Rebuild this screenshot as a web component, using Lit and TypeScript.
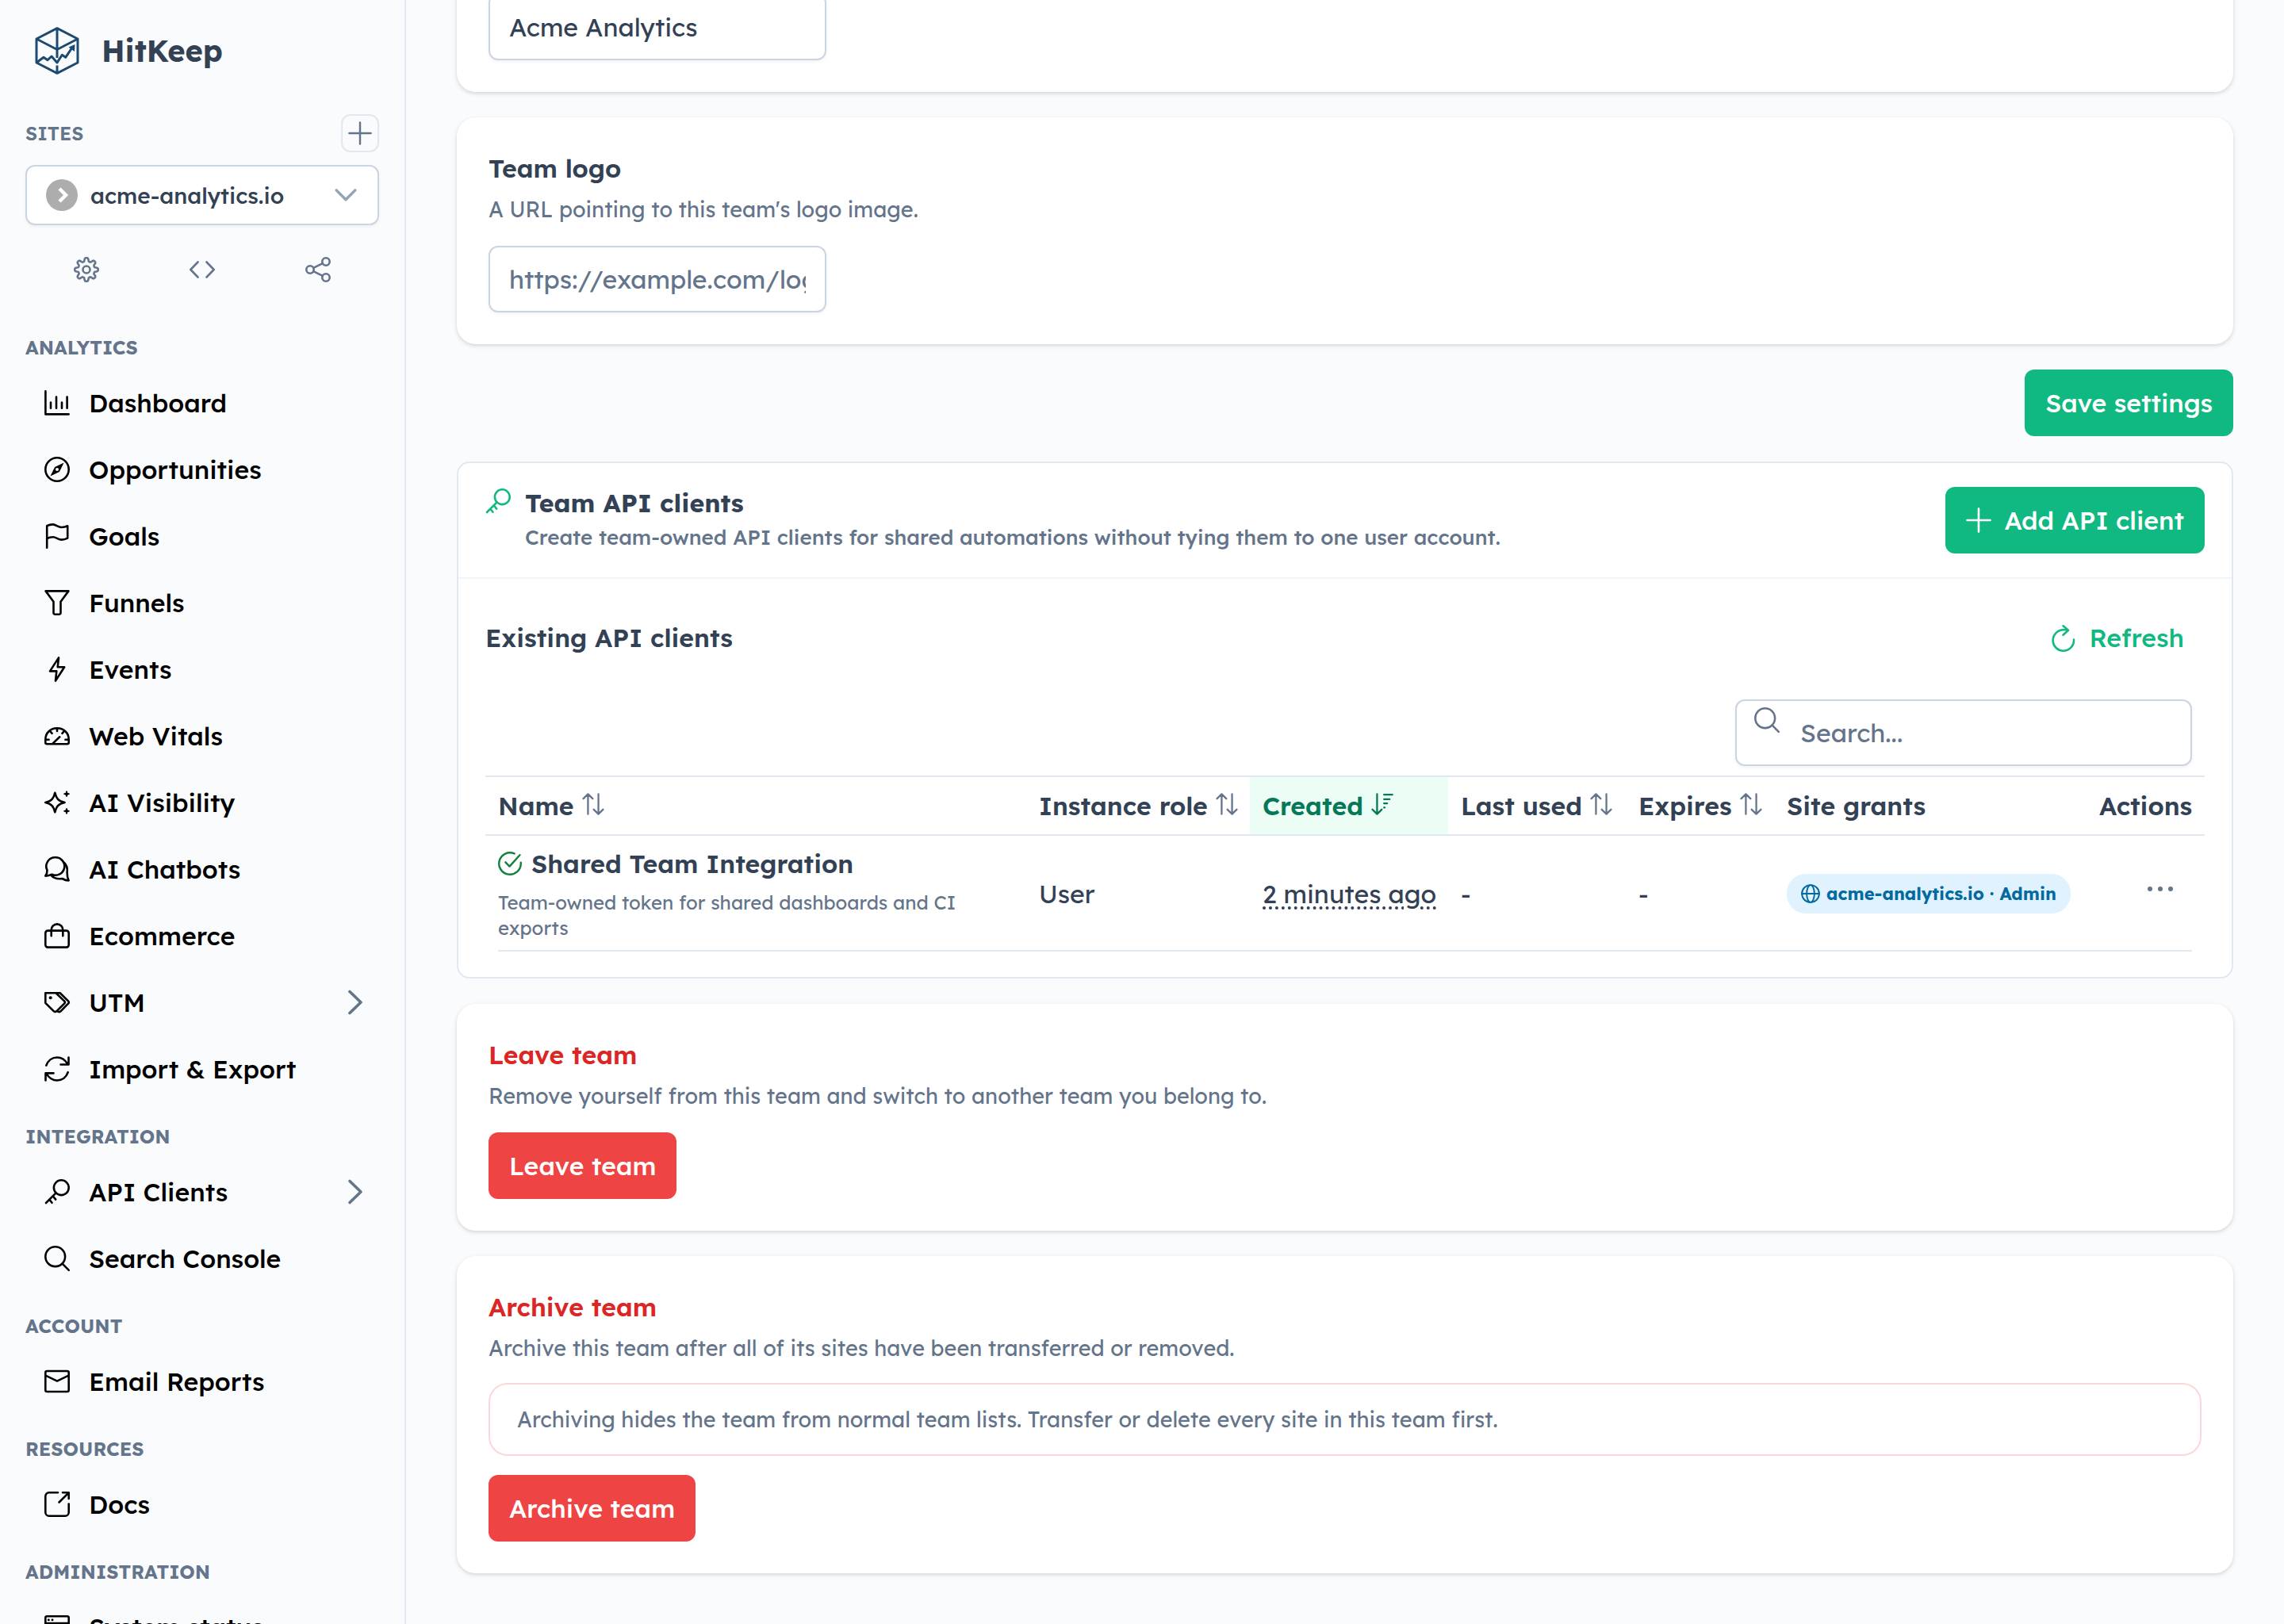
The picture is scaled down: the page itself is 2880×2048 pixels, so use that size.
import { LitElement, html, css, svg, nothing } from "lit";
import type { SVGTemplateResult } from "lit";
import { classMap } from "lit/directives/class-map.js";

/** Outline of an eight-toothed cog, traced around the centre of a 32-unit box. */
function cogOutline(): string {
  const points: string[] = [];
  const steps = 128;
  for (let i = 0; i < steps; i++) {
    const angle = (i / steps) * Math.PI * 2;
    const radius = 12.6 + 2.2 * Math.tanh(2 * Math.cos(8 * angle));
    points.push(
      `${(16 + radius * Math.sin(angle)).toFixed(2)} ${(16 - radius * Math.cos(angle)).toFixed(2)}`
    );
  }
  return `M${points.join("L")}Z`;
}

const ICONS: Record<string, SVGTemplateResult> = {
  chart: svg`<path d="M1.4 1.4V30.4H30.6M8 15.5V22.8M15 8.5V22.8M22 15.5V22.8M28.6 8.5V22.8"/>`,
  compass: svg`<circle cx="16" cy="16" r="14.7"/><path class="solid" fill-rule="evenodd" d="M24.6 7.4 18.9 18.9 7.4 24.6 13.1 13.1ZM16 14a2 2 0 1 0 0 4 2 2 0 0 0 0-4Z"/>`,
  flag: svg`<path d="M3.2 30.7V3.2Q6.5 1.3 11 1.4C14.5 1.7 17.5 5 21.5 5Q25.5 5 29.2 3.3V18.6Q25.5 20.6 21.5 20.6C17.5 20.6 14.5 17.2 11 17.2Q6.5 17.2 3.2 19"/>`,
  funnel: svg`<path d="M1.6 1.4H30.4L20.5 14.7V28.9A1.8 1.8 0 0 1 18.7 30.7H13.3A1.8 1.8 0 0 1 11.5 28.9V14.7Z"/>`,
  bolt: svg`<path d="M18 1.4 7 18.4H15.3L14 30.6 25.2 13.3H16.7Z"/>`,
  gauge: svg`<path d="M3.2 26.2A1.9 1.9 0 0 1 1.3 24.3V20.5C1.3 12 7.8 6.3 16 6.3S30.7 12 30.7 20.5V24.3A1.9 1.9 0 0 1 28.8 26.2ZM16 6.8V10M7.6 10.6 9.6 12.8M24.4 10.6 22.4 12.8M2.5 20.8H5.6M29.5 20.8H26.4M10.5 25.6 19.3 17.3"/>`,
  sparkles: svg`<path d="M13.3 3.8C14.8 10.5 17.5 14.3 25.6 16 17.5 17.7 14.8 21.5 13.3 28.2 11.8 21.5 9.1 17.7 1.3 16 9.1 14.3 11.8 10.5 13.3 3.8Z"/><path class="speck" d="M28 2 28.8 4.4 31.2 5.2 28.8 6 28 8.4 27.2 6 24.8 5.2 27.2 4.4ZM28 23.6 28.8 26 31.2 26.8 28.8 27.6 28 30 27.2 27.6 24.8 26.8 27.2 26Z"/>`,
  chats: svg`<path d="M13.6 1.3A11.2 11.2 0 1 1 9.5 22.7Q5.5 24.6 1.3 24.6 3.6 21.5 3.5 17.5A11.2 11.2 0 0 1 13.6 1.3ZM24.5 7.5Q29.8 12 28.6 20.5 28.7 26.5 30.6 30.4 26.5 30.3 22.5 28 13.5 29.5 8 23.3"/>`,
  bag: svg`<rect x="1.3" y="9.6" width="29.4" height="21" rx="3"/><path d="M8.7 16.3V8.7A7.3 7.3 0 0 1 23.3 8.7V16.3"/>`,
  tags: svg`<path d="M1.3 4.3H14.5L25.3 14.6Q26.7 16 25.3 17.4L15.3 27.3Q13.6 28.7 11.9 27.3L1.3 16.8ZM15 4.3H19.7L30.2 14.6Q31.5 16 30.2 17.4L20.5 27.3Q19 28.7 17 27.6"/><circle class="solid" cx="7.7" cy="10.3" r="2"/>`,
  sync: svg`<path d="M2.3 11.6C4.5 5.5 9.7 1.5 16 1.5 22 1.5 26.5 5 29.6 10.2M30.5 1.6V10.5H20.5M29.7 20.2C27.5 26.5 22.3 30.5 16 30.5 10 30.5 5.5 27 2.3 21.6M1.5 30.4V21.4H11.5"/>`,
  key: svg`<circle cx="21.3" cy="10.7" r="9.4"/><path d="M14.6 17.4 2 30M6.3 25.8 9.5 29.8M10.8 21.5 14.2 25.6"/>`,
  search: svg`<circle cx="13.7" cy="13.7" r="12.4"/><path d="M22.7 22.7 30.8 30.8"/>`,
  mail: svg`<rect x="1.3" y="3" width="29.4" height="26" rx="2"/><path d="M1.5 8.6 16 15.6 30.5 8.6"/>`,
  external: svg`<path d="M17 1.3H5.8A4.5 4.5 0 0 0 1.3 5.8V26.2A4.5 4.5 0 0 0 5.8 30.7H26.2A4.5 4.5 0 0 0 30.7 26.2V15.5M23 1.3H30.7V9M30.7 1.3 18.5 13.5"/>`,
  server: svg`<rect x="1.3" y="2.3" width="29.4" height="27.4" rx="2"/><path d="M1.5 11H30.5"/><circle class="solid" cx="5.3" cy="6.7" r="1.5"/><circle class="solid" cx="10" cy="6.7" r="1.5"/>`,
  cog: svg`<path d=${cogOutline()}/><circle cx="16" cy="16" r="4.5"/>`,
  code: svg`<path d="M10.5 6.5 1.3 16 10.5 25.5M21.5 6.5 30.7 16 21.5 25.5"/>`,
  share: svg`<circle cx="6" cy="16" r="4.7"/><circle cx="26" cy="6" r="4.7"/><circle cx="26" cy="26" r="4.7"/><path d="M10.2 13.9 21.8 8.1M10.2 18.1 21.8 23.9"/>`,
  plus: svg`<path d="M16 1.5V30.5M1.5 16H30.5"/>`,
  right: svg`<path d="M9 2.5 23 16 9 29.5"/>`,
  down: svg`<path d="M2.5 9 16 22.5 29.5 9"/>`,
  refresh: svg`<path d="M29 18.5A13.2 13.2 0 1 1 15.8 6.3H21.5M15.5 1.3 22 6.8 15.5 12.8"/>`,
  sort: svg`<path d="M8.5 30.5V2M1.8 8.2 8.5 1.6 15.2 8.2M23.5 1.5V30M16.8 23.8 23.5 30.4 30.2 23.8"/>`,
  sortDown: svg`<path d="M8.5 1.5V30M1.8 23.8 8.5 30.4 15.2 23.8M18.5 2.5H30.5M18.5 9H26.5M18.5 15H23M18.5 21H19.5"/>`,
  check: svg`<path d="M30.7 14.7V16A14.7 14.7 0 1 1 22 2.6M29.3 4.5 15.5 19.8 10 14.3"/>`,
  globe: svg`<circle cx="16" cy="16" r="14.5"/><ellipse cx="16" cy="16" rx="6.5" ry="14.5"/><path d="M1.5 16H30.5"/>`,
};

const icon = (name: string, kind = "") =>
  html`<svg class="icon ${kind}" viewBox="0 0 32 32" aria-hidden="true">${ICONS[name]}</svg>`;

interface NavItem {
  icon: string;
  label: string;
  expandable?: boolean;
}

const NAV: { title: string; items: NavItem[] }[] = [
  {
    title: "Analytics",
    items: [
      { icon: "chart", label: "Dashboard" },
      { icon: "compass", label: "Opportunities" },
      { icon: "flag", label: "Goals" },
      { icon: "funnel", label: "Funnels" },
      { icon: "bolt", label: "Events" },
      { icon: "gauge", label: "Web Vitals" },
      { icon: "sparkles", label: "AI Visibility" },
      { icon: "chats", label: "AI Chatbots" },
      { icon: "bag", label: "Ecommerce" },
      { icon: "tags", label: "UTM", expandable: true },
      { icon: "sync", label: "Import & Export" },
    ],
  },
  {
    title: "Integration",
    items: [
      { icon: "key", label: "API Clients", expandable: true },
      { icon: "search", label: "Search Console" },
    ],
  },
  { title: "Account", items: [{ icon: "mail", label: "Email Reports" }] },
  { title: "Resources", items: [{ icon: "external", label: "Docs" }] },
  { title: "Administration", items: [{ icon: "server", label: "System status" }] },
];

const COLUMNS = [
  { id: "name", label: "Name", sort: "sort" },
  { id: "role", label: "Instance role", sort: "sort" },
  { id: "created", label: "Created", sort: "sortDown" },
  { id: "used", label: "Last used", sort: "sort" },
  { id: "expires", label: "Expires", sort: "sort" },
  { id: "grants", label: "Site grants", sort: "" },
  { id: "actions", label: "Actions", sort: "" },
];

const base = css`
  *,
  *::before,
  *::after {
    box-sizing: border-box;
  }
  h1,
  h2,
  h3,
  p,
  ul {
    margin: 0;
    padding: 0;
    list-style: none;
  }
  button,
  input,
  select {
    margin: 0;
    font: inherit;
    color: inherit;
  }
  button {
    padding: 0;
    border: 0;
    background: none;
  }
  a {
    color: inherit;
    text-decoration: none;
  }
  .icon {
    display: block;
    flex: none;
    width: 32px;
    height: 32px;
    fill: none;
    stroke: currentColor;
    stroke-width: 2.6;
    stroke-linecap: round;
    stroke-linejoin: round;
    overflow: visible;
  }
  .icon .solid {
    fill: currentColor;
    stroke: none;
  }
  .icon .speck {
    fill: currentColor;
    stroke-width: 1.4;
  }
`;

class AppSidebar extends LitElement {
  static styles = [
    base,
    css`
      :host {
        display: block;
        padding: 34px 32px 0;
        border-right: 2px solid #e2e8f0;
        overflow: hidden;
      }
      .brand {
        display: flex;
        align-items: center;
        gap: 28px;
        height: 60px;
        padding-left: 12px;
        font-size: 38px;
        font-weight: 700;
      }
      .mark {
        width: 56px;
        height: 60px;
        fill: none;
        stroke: #1c4b72;
        stroke-width: 3;
        stroke-linejoin: round;
      }
      .mark .tip {
        fill: #1c4b72;
        stroke: none;
      }
      .sites {
        display: flex;
        align-items: center;
        justify-content: space-between;
        margin-top: 50px;
      }
      .heading {
        color: #64748b;
        font-size: 24px;
        font-weight: 600;
        line-height: 31px;
        text-transform: uppercase;
      }
      .nav .heading {
        padding: 28px 0 12px;
        font-weight: 700;
      }
      .add {
        display: grid;
        place-items: center;
        width: 48px;
        height: 48px;
        border: 2px solid #e2e8f0;
        border-radius: 12px;
        color: #64748b;
      }
      .add .icon {
        width: 30px;
        height: 30px;
      }
      .picker {
        display: flex;
        align-items: center;
        gap: 16px;
        height: 76px;
        margin-top: 16px;
        padding: 0 26px 0 24px;
        border: 2px solid #cbd5e1;
        border-radius: 12px;
        background: #fff;
        box-shadow: 0 2px 4px rgb(18 18 23 / 5%);
      }
      .favicon {
        width: 40px;
        height: 40px;
        flex: none;
      }
      .picker select {
        flex: 1;
        min-width: 0;
        padding: 0;
        border: 0;
        background: none;
        appearance: none;
        font-size: 28px;
        font-weight: 500;
        color: #334155;
        outline: 0;
      }
      .picker .icon {
        width: 28px;
        height: 28px;
        color: #94a3b8;
        stroke-width: 4;
      }
      .tools {
        display: grid;
        grid-template-columns: repeat(3, 1fr);
        justify-items: center;
        padding: 32px 4px 31px;
        color: #64748b;
      }
      .tools button {
        display: grid;
        place-items: center;
        width: 48px;
        height: 48px;
      }
      .link {
        display: flex;
        align-items: center;
        gap: 24px;
        height: 84px;
        padding: 0 14px 0 24px;
        color: #000;
        font-size: 32px;
        font-weight: 500;
      }
      .label {
        flex: 1;
      }
      .more {
        color: #64748b;
        stroke-width: 3.6;
      }
    `,
  ];

  render() {
    return html`
      <div class="brand">
        <svg class="mark" viewBox="0 0 56 60" aria-hidden="true">
          <path d="M28 1.7 54 15V45L28 58.3 2 45V15ZM2 15 28 28.5 54 15M28 1.7V39M28 48.5V58" />
          <path d="M2 45 11 38.3 16 41.7 21 37 28 45 34.3 35.3 38.7 38.3 47 26" />
          <path class="tip" d="M42.5 25.5 50.5 22 50 31Z" />
        </svg>
        <span>HitKeep</span>
      </div>
      <div class="sites">
        <h2 class="heading">Sites</h2>
        <button class="add" type="button" aria-label="Add site">${icon("plus")}</button>
      </div>
      <label class="picker">
        <svg class="favicon" viewBox="0 0 40 40" aria-hidden="true">
          <circle cx="20" cy="20" r="20" fill="#adadad" />
          <path d="M17 12 25 20 17 28" fill="none" stroke="#fff" stroke-width="4.5" />
        </svg>
        <select aria-label="Site">
          <option>acme-analytics.io</option>
        </select>
        ${icon("down")}
      </label>
      <div class="tools">
        <button type="button" aria-label="Site settings">${icon("cog")}</button>
        <button type="button" aria-label="Tracking code">${icon("code")}</button>
        <button type="button" aria-label="Share">${icon("share")}</button>
      </div>
      <nav class="nav">
        ${NAV.map(
          (group) => html`
            <h2 class="heading">${group.title}</h2>
            <ul>
              ${group.items.map(
                (item) => html`<li>
                  <a class="link" href="#">
                    ${icon(item.icon)}<span class="label">${item.label}</span>
                    ${item.expandable ? icon("right", "more") : nothing}
                  </a>
                </li>`
              )}
            </ul>
          `
        )}
      </nav>
    `;
  }
}
customElements.define("app-sidebar", AppSidebar);

class TeamSettings extends LitElement {
  static styles = [
    base,
    css`
      :host {
        display: flex;
        flex-direction: column;
        gap: 32px;
        padding: 0 64px 64px;
        font-size: 32px;
        line-height: 42px;
      }
      .card {
        padding: 40px;
        border-radius: 24px;
        background: #fff;
        box-shadow: 0 2px 6px rgb(0 0 0 / 10%), 0 2px 4px rgb(0 0 0 / 6%);
      }
      /* The page is scrolled so that the first field meets the top edge. */
      .scrolled {
        margin-top: -48px;
      }
      .title {
        font-size: 32px;
        font-weight: 600;
        line-height: 48px;
      }
      .danger .title {
        color: #dc2626;
      }
      .hint {
        margin: 8px 0 26px;
        color: #64748b;
        font-size: 27px;
        line-height: 40px;
      }
      .field {
        display: block;
        width: 426px;
        height: 84px;
        padding: 0 24px;
        border: 2px solid #cbd5e1;
        border-radius: 12px;
        background: #fff;
        box-shadow: 0 2px 4px rgb(18 18 23 / 5%);
        outline: 0;
      }
      .field::placeholder {
        color: #64748b;
        opacity: 1;
      }
      .button {
        display: inline-flex;
        align-items: center;
        gap: 16px;
        height: 84px;
        padding: 0 26px;
        border-radius: 12px;
        color: #fff;
        font-weight: 500;
      }
      .button .icon {
        width: 32px;
        height: 32px;
        stroke-width: 2.6;
      }
      .primary {
        background: #10b981;
      }
      .red {
        background: #ef4444;
      }
      .text {
        color: #10b981;
      }
      .save {
        align-self: flex-end;
      }
      .panel {
        border: 2px solid #e2e8f0;
        border-radius: 16px;
        background: #fff;
      }
      .top {
        display: flex;
        align-items: center;
        justify-content: space-between;
        padding: 30px 34px;
        border-bottom: 2px solid #f1f5f9;
      }
      .intro {
        display: flex;
        gap: 18px;
      }
      .intro .icon {
        margin-top: 2px;
        color: #10b981;
      }
      .name {
        margin-bottom: 4px;
        font-size: 32px;
        font-weight: 700;
        line-height: 40px;
      }
      .about {
        color: #64748b;
        font-size: 26px;
        font-weight: 500;
        line-height: 40px;
      }
      .body {
        padding: 32px 34px;
      }
      .bar {
        display: flex;
        align-items: center;
        justify-content: space-between;
      }
      .search {
        display: flex;
        width: 576px;
        gap: 26px;
        margin: 36px 16px 12px auto;
        padding: 0 22px;
      }
      .search .icon {
        margin-top: 8px;
        color: #64748b;
      }
      .search input {
        flex: 1;
        min-width: 0;
        padding: 0;
        border: 0;
        background: none;
        outline: 0;
      }
      .search input::placeholder {
        color: #64748b;
        opacity: 1;
      }
      table {
        width: 100%;
        table-layout: fixed;
        border-collapse: separate;
        border-spacing: 0;
        text-align: left;
      }
      th {
        height: 76px;
        padding: 0 16px;
        border-top: 2px solid #e2e8f0;
        border-bottom: 2px solid #e2e8f0;
        font-weight: 600;
      }
      .sorter {
        display: inline-flex;
        align-items: center;
        gap: 10px;
        white-space: nowrap;
      }
      .sorter .icon {
        width: 28px;
        height: 28px;
        margin-bottom: 4px;
        color: #64748b;
      }
      .w-role {
        width: 282px;
      }
      .w-created {
        width: 250px;
      }
      .w-used {
        width: 224px;
      }
      .w-expires {
        width: 187px;
      }
      .w-grants {
        width: 394px;
      }
      .w-actions {
        width: 149px;
        text-align: right;
      }
      .sorted,
      .sorted .sorter .icon {
        color: #047857;
      }
      .sorted {
        background: #ecfdf5;
      }
      td {
        padding: 14px 16px 12px;
      }
      .client {
        display: flex;
        align-items: center;
        gap: 12px;
        margin-bottom: 12px;
        font-weight: 600;
      }
      .client .icon {
        width: 30px;
        height: 30px;
        color: #15803d;
      }
      .note {
        color: #64748b;
        font-size: 24px;
        line-height: 32px;
      }
      .ago {
        text-decoration: underline dotted 4px;
        text-underline-offset: 4px;
        white-space: nowrap;
      }
      .tag {
        display: inline-flex;
        align-items: center;
        gap: 8px;
        height: 50px;
        padding: 0 18px;
        border-radius: 24px;
        background: #e0f2fe;
        color: #0369a1;
        font-size: 22px;
        font-weight: 700;
        white-space: nowrap;
      }
      .tag .icon {
        width: 24px;
        height: 24px;
      }
      .menu {
        display: inline-grid;
        place-items: center;
        width: 80px;
        height: 84px;
        vertical-align: bottom;
      }
      .dots {
        width: 32px;
        height: 18px;
        fill: #64748b;
      }
      .rule {
        height: 2px;
        margin: 0 16px;
        background: #e2e8f0;
      }
      .above-notice {
        margin-bottom: 24px;
      }
      .notice {
        margin-bottom: 24px;
        padding: 24px 34px;
        border: 2px solid #fad7d9;
        border-radius: 24px;
        color: #64748b;
        font-size: 27px;
        line-height: 40px;
      }
    `,
  ];

  render() {
    return html`
      <section class="card scrolled">
        <input class="field" type="text" aria-label="Team name" value="Acme Analytics" />
      </section>

      <section class="card">
        <h2 class="title"><label for="logo">Team logo</label></h2>
        <p class="hint">A URL pointing to this team's logo image.</p>
        <input class="field" id="logo" type="url" placeholder="https://example.com/logo.png" />
      </section>

      <button class="button primary save" type="button">Save settings</button>

      <section class="panel">
        <header class="top">
          <div class="intro">
            ${icon("key")}
            <div>
              <h2 class="name">Team API clients</h2>
              <p class="about">
                Create team-owned API clients for shared automations without tying them to one user
                account.
              </p>
            </div>
          </div>
          <button class="button primary" type="button">${icon("plus")}Add API client</button>
        </header>
        <div class="body">
          <div class="bar">
            <h3 class="title">Existing API clients</h3>
            <button class="button text" type="button">${icon("refresh")}Refresh</button>
          </div>
          <label class="field search">
            ${icon("search")}
            <input type="text" aria-label="Search" placeholder="Search..." />
          </label>
          <table>
            <thead>
              <tr>
                ${COLUMNS.map(
                  (column) => html`<th
                    scope="col"
                    class=${classMap({
                      [`w-${column.id}`]: true,
                      sorted: column.sort === "sortDown",
                    })}
                  >
                    ${column.sort
                      ? html`<button class="sorter" type="button">
                          ${column.label}${icon(column.sort)}
                        </button>`
                      : column.label}
                  </th>`
                )}
              </tr>
            </thead>
            <tbody>
              <tr>
                <td>
                  <div class="client">${icon("check")}Shared Team Integration</div>
                  <p class="note">Team-owned token for shared dashboards and CI exports</p>
                </td>
                <td>User</td>
                <td><span class="ago">2 minutes ago</span></td>
                <td>-</td>
                <td>-</td>
                <td><span class="tag">${icon("globe")}acme-analytics.io · Admin</span></td>
                <td class="w-actions">
                  <button class="menu" type="button" aria-label="Client actions">
                    <svg class="dots" viewBox="0 0 32 18">
                      <circle cx="3" cy="3" r="3" />
                      <circle cx="16" cy="3" r="3" />
                      <circle cx="29" cy="3" r="3" />
                    </svg>
                  </button>
                </td>
              </tr>
            </tbody>
          </table>
          <div class="rule"></div>
        </div>
      </section>

      <section class="card danger">
        <h2 class="title">Leave team</h2>
        <p class="hint">Remove yourself from this team and switch to another team you belong to.</p>
        <button class="button red" type="button">Leave team</button>
      </section>

      <section class="card danger">
        <h2 class="title">Archive team</h2>
        <p class="hint above-notice">
          Archive this team after all of its sites have been transferred or removed.
        </p>
        <p class="notice">
          Archiving hides the team from normal team lists. Transfer or delete every site in this
          team first.
        </p>
        <button class="button red" type="button">Archive team</button>
      </section>
    `;
  }
}
customElements.define("team-settings", TeamSettings);

class AppRoot extends LitElement {
  static styles = css`
    :host {
      display: grid;
      grid-template-columns: 512px minmax(0, 1fr);
      height: 100vh;
      overflow: hidden;
      background: #fafbfd;
      color: #334155;
      font-family: Lexend, Inter, "Open Sans", sans-serif;
    }
    app-sidebar,
    main {
      min-height: 0;
      overflow: hidden;
    }
  `;

  render() {
    return html`<app-sidebar></app-sidebar><main><team-settings></team-settings></main>`;
  }
}
customElements.define("app-root", AppRoot);
